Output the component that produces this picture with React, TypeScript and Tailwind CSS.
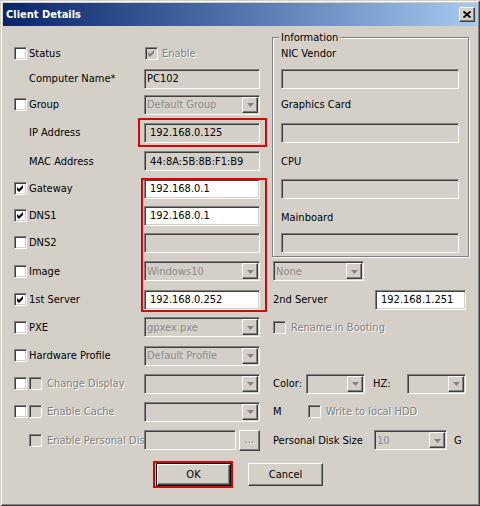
import React from 'react'

const SUNKEN =
  'border border-t-[#808080] border-l-[#808080] border-b-white border-r-white shadow-[inset_1px_1px_0_#404040,inset_-1px_-1px_0_#d4d0c8]'
const RAISED =
  'border border-t-white border-l-white border-b-[#404040] border-r-[#404040] shadow-[inset_-1px_-1px_0_#808080]'
const GRAY = 'text-[#808080] [text-shadow:1px_1px_0_#fff]'

function Check({ checked = false, disabled = false }: { checked?: boolean; disabled?: boolean }) {
  return (
    <span
      className={`relative inline-block w-[13px] h-[13px] shrink-0 ${SUNKEN} ${disabled ? 'bg-[#d4d0c8]' : 'bg-white'}`}
    >
      {checked && (
        <svg viewBox="0 0 9 9" className="absolute left-[1px] top-[1px] w-[9px] h-[9px]">
          <polygon points="1,3 3,5 7,1 7,4 3,8 1,6" fill={disabled ? '#808080' : '#000'} />
        </svg>
      )}
    </span>
  )
}

function Field({ value = '', white = false, w = 'w-[116px]', pad = 'pl-[5px]' }: { value?: string; white?: boolean; w?: string; pad?: string }) {
  return (
    <div className={`${w} h-[20px] flex items-center ${pad} ${SUNKEN} ${white ? 'bg-white' : 'bg-[#d4d0c8]'}`}>
      <span className="whitespace-nowrap">{value}</span>
    </div>
  )
}

function Select({ value = '', w = 'w-[116px]' }: { value?: string; w?: string }) {
  return (
    <div className={`${w} h-[20px] flex items-center ${SUNKEN} bg-[#d4d0c8]`}>
      <span className="flex-1 pl-[2px] text-[#8c8c8c] whitespace-nowrap overflow-hidden">{value}</span>
      <span className={`w-[16px] h-[16px] mr-[1px] shrink-0 flex items-center justify-center bg-[#d4d0c8] ${RAISED}`}>
        <svg viewBox="0 0 7 4" className="w-[7px] h-[4px] mt-[1px]">
          <path d="M0 0h7L3.5 4z" fill="#808080" />
        </svg>
      </span>
    </div>
  )
}

function CheckRow({ label, checked = false }: { label: string; checked?: boolean }) {
  return (
    <div className="flex items-center gap-[2px]">
      <Check checked={checked} />
      <span>{label}</span>
    </div>
  )
}

function Label({ text }: { text: string }) {
  return <div className="flex items-center pl-[15px]">{text}</div>
}

const GROUP_ROWS: { h: string; node: React.ReactNode }[] = [
  { h: 'h-[28px] pt-[2px]', node: 'NIC Vendor' },
  { h: 'h-[25px]', node: <Field w="w-[178px]" /> },
  { h: 'h-[27px]', node: 'Graphics Card' },
  { h: 'h-[29px]', node: <Field w="w-[178px]" /> },
  { h: 'h-[28px]', node: 'CPU' },
  { h: 'h-[27px]', node: <Field w="w-[178px]" /> },
  { h: 'h-[27px] pt-[3px]', node: 'Mainboard' },
  { h: 'h-[27px]', node: <Field w="w-[178px]" /> },
]

export default function App() {
  return (
    <div className="relative w-[480px] h-[506px] p-[3px] bg-[#d4d0c8] text-black text-[11px] leading-none font-['DejaVu_Sans_Condensed','DejaVu_Sans',sans-serif] shadow-[inset_1px_1px_0_#d4d0c8,inset_-1px_-1px_0_#404040,inset_2px_2px_0_#fff,inset_-2px_-2px_0_#808080]">
      {/* title bar */}
      <div className="h-[23px] flex items-center justify-between bg-linear-to-r from-[#0a246a] to-[#a6caf0]">
        <span className="pl-[3px] font-bold text-white">Client Details</span>
        <span className={`mr-[2px] w-[16px] h-[15px] flex items-center justify-center bg-[#d4d0c8] ${RAISED}`}>
          <svg viewBox="0 0 8 7" className="w-[8px] h-[7px]">
            <path d="M0.5 0.5L7.5 6.5M7.5 0.5L0.5 6.5" stroke="#000" strokeWidth="1.9" />
          </svg>
        </span>
      </div>

      {/* form */}
      <div className="pl-[11px] pt-[14px]">
        <div className="grid grid-cols-[130px_128px_197px] grid-rows-[26px_25px_27px_29px_28px_27px_27px_27px_30px_27px_28px_29px_27px_29px_28px]">
          <fieldset className="col-start-3 row-start-1 row-span-8 self-start relative mt-[-3px] h-[220px] border border-[#808080] shadow-[1px_1px_0_#fff,inset_1px_1px_0_#fff] pl-[8px] flex flex-col">
            <span className="absolute -top-[6px] left-[6px] px-[2px] bg-[#d4d0c8]">Information</span>
            {GROUP_ROWS.map((r, i) => (
              <div key={i} className={`${r.h} flex items-center`}>
                {r.node}
              </div>
            ))}
          </fieldset>

          <CheckRow label="Status" />
          <div className="flex items-center gap-[4px] pl-[1px]">
            <Check checked disabled />
            <span className={GRAY}>Enable</span>
          </div>

          <Label text="Computer Name*" />
          <div className="flex items-center"><Field value="PC102" pad="pl-[2px]" /></div>

          <CheckRow label="Group" />
          <div className="flex items-center"><Select value="Default Group" /></div>

          <Label text="IP Address" />
          <div className="flex items-center"><Field value="192.168.0.125" /></div>

          <Label text="MAC Address" />
          <div className="flex items-center"><Field value="44:8A:5B:8B:F1:B9" /></div>

          <CheckRow label="Gateway" checked />
          <div className="flex items-center"><Field value="192.168.0.1" white /></div>

          <CheckRow label="DNS1" checked />
          <div className="flex items-center"><Field value="192.168.0.1" white /></div>

          <CheckRow label="DNS2" />
          <div className="flex items-center"><Field /></div>

          <CheckRow label="Image" />
          <div className="flex items-center"><Select value="Windows10" /></div>
          <div className="flex items-center pl-[1px]"><Select value="None" w="w-[91px]" /></div>

          <CheckRow label="1st Server" checked />
          <div className="flex items-center"><Field value="192.168.0.252" white /></div>
          <div className="flex items-center pl-[1px]">
            <span className="w-[102px]">2nd Server</span>
            <Field value="192.168.1.251" white w="w-[91px]" />
          </div>

          <CheckRow label="PXE" />
          <div className="flex items-center"><Select value="gpxex.pxe" /></div>
          <div className="flex items-center gap-[5px] pl-[1px]">
            <Check disabled />
            <span className={GRAY}>Rename in Booting</span>
          </div>

          <CheckRow label="Hardware Profile" />
          <div className="flex items-center"><Select value="Default Profile" /></div>
          <div />

          <div className="flex items-center gap-[2px]">
            <Check />
            <Check disabled />
            <span className={`pl-[3px] ${GRAY}`}>Change Display</span>
          </div>
          <div className="flex items-center"><Select /></div>
          <div className="flex items-center pl-[1px]">
            <span className="w-[33px]">Color:</span>
            <Select w="w-[59px]" />
            <span className="w-[34px] ml-[8px]">HZ:</span>
            <Select w="w-[59px]" />
          </div>

          <div className="flex items-center gap-[2px]">
            <Check />
            <Check disabled />
            <span className={`pl-[3px] ${GRAY}`}>Enable Cache</span>
          </div>
          <div className="flex items-center"><Select /></div>
          <div className="flex items-center pl-[1px]">
            <span className="w-[35px]">M</span>
            <Check disabled />
            <span className={`pl-[5px] ${GRAY}`}>Write to local HDD</span>
          </div>

          <div className="col-span-2 flex items-center">
            <div className="w-[130px] flex items-center pl-[15px] gap-[5px] overflow-hidden">
              <Check disabled />
              <span className={`whitespace-nowrap ${GRAY}`}>Enable Personal Disk</span>
            </div>
            <Field w="w-[92px]" />
            <span className={`ml-[3px] w-[21px] h-[21px] flex items-end justify-center pb-[5px] bg-[#d4d0c8] ${RAISED} ${GRAY}`}>
              ...
            </span>
          </div>
          <div className="flex items-center pl-[1px]">
            <span className="w-[101px]">Personal Disk Size</span>
            <Select value="10" w="w-[73px]" />
            <span className="ml-[7px]">G</span>
          </div>
        </div>

        {/* buttons */}
        <div className="mt-[9px] pl-[142px] flex gap-[17px]">
          <button className="w-[75px] h-[23px] border border-black bg-[#d4d0c8] shadow-[inset_1px_1px_0_#fff,inset_-1px_-1px_0_#404040,inset_-2px_-2px_0_#808080]">
            OK
          </button>
          <button className={`w-[75px] h-[23px] bg-[#d4d0c8] ${RAISED}`}>Cancel</button>
        </div>
      </div>

      {/* annotations */}
      <div className="absolute left-[138px] top-[118px] w-[129px] h-[29px] border-2 border-[#e00000]" />
      <div className="absolute left-[141px] top-[178px] w-[126px] h-[134px] border-2 border-[#e00000]" />
      <div className="absolute left-[153px] top-[461px] w-[80px] h-[27px] border-2 border-[#e00000]" />
    </div>
  )
}
